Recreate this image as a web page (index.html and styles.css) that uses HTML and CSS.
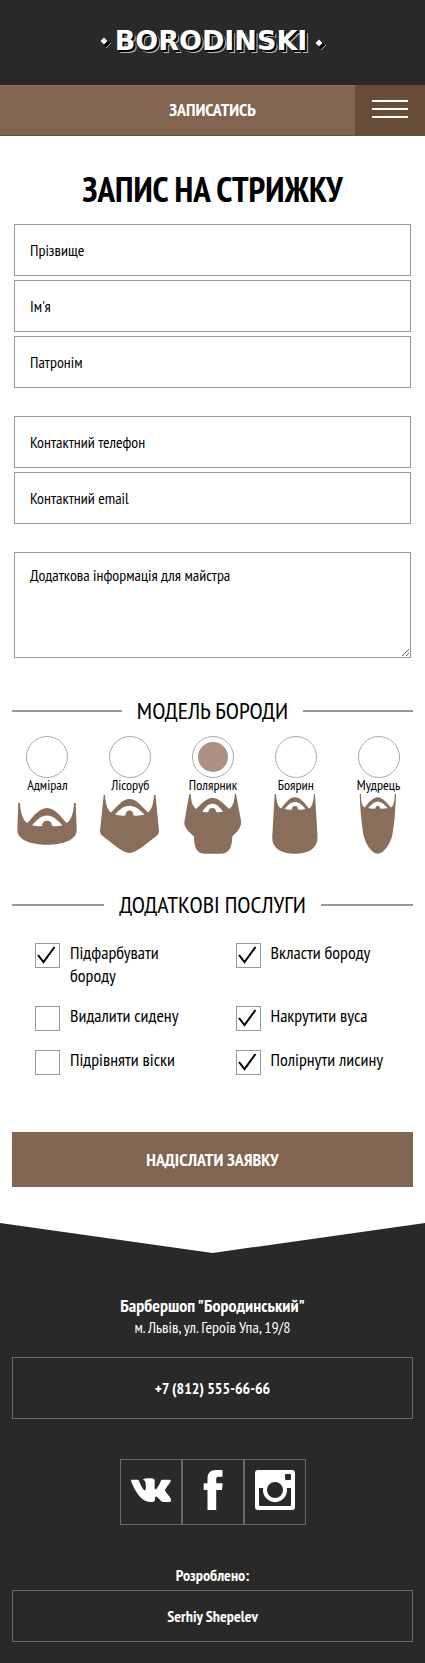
FILE: index.html
```html
<!DOCTYPE html>
<html lang="uk">
<head>
<meta charset="utf-8">
<meta name="viewport" content="width=device-width, initial-scale=1">
<title>Запис на стрижку</title>
<link rel="stylesheet" href="styles.css">
</head>
<body>
<header class="header">
  <a class="logo" href="#">
    <svg class="logo-mark" viewBox="0 0 12 12" aria-hidden="true"><path class="mark-line" d="M6 11 11 6"/><path class="mark-shade" d="M6 2 10 6 6 10 2 6Z"/><path class="mark-face" d="M4 .5 7.500 4 4 7.500 .5 4Z"/></svg>
    <span class="logo-text">BORODINSKI</span>
    <svg class="logo-mark logo-mark-end" viewBox="0 0 12 12" aria-hidden="true"><path class="mark-line" d="M6 11 11 6"/><path class="mark-shade" d="M6 2 10 6 6 10 2 6Z"/><path class="mark-face" d="M4 .5 7.500 4 4 7.500 .5 4Z"/></svg>
  </a>
</header>
<nav class="bar">
  <a class="bar-link" href="#form">ЗАПИСАТИСЬ</a>
  <button class="menu" type="button" aria-label="Меню"><span></span><span></span><span></span></button>
</nav>
<main class="main">
  <h1 class="title">ЗАПИС НА СТРИЖКУ</h1>
  <form id="form" class="form">
    <div class="fields">
      <input class="field" type="text" placeholder="Прізвище" aria-label="Прізвище">
      <input class="field" type="text" placeholder="Ім'я" aria-label="Ім'я">
      <input class="field" type="text" placeholder="Патронім" aria-label="Патронім">
    </div>
    <div class="fields">
      <input class="field" type="tel" placeholder="Контактний телефон" aria-label="Контактний телефон">
      <input class="field" type="email" placeholder="Контактний email" aria-label="Контактний email">
    </div>
    <div class="fields">
      <textarea class="field area" placeholder="Додаткова інформація для майстра" aria-label="Додаткова інформація для майстра"></textarea>
    </div>

    <h2 class="section beard-title">МОДЕЛЬ БОРОДИ</h2>
    <div class="beards">
      <label class="beard"><input class="radio" type="radio" name="beard">Адмірал
        <svg class="beard-pic" viewBox="0 0 60 60" aria-hidden="true"><path d="M1.300 9H3C3.500 20 6 26 10.300 29 16 23 22 14 30 14S44 23 49.700 29C54 26 56.500 20 57 9H58.700L59.700 36C59.700 46 46 50.700 30 50.700S.3 46 .3 36ZM15 31.300Q20 32.500 25 32C25 28.500 27 26.700 30 26.700S35 28.500 35 32Q40 32.500 45.500 31.300C39 25 36 21.500 30 21.500S21 25 15 31.300Z"/></svg></label>
      <label class="beard"><input class="radio" type="radio" name="beard">Лісоруб
        <svg class="beard-pic" viewBox="0 0 60 60" aria-hidden="true"><path d="M3.700 1H5C5.500 10 7.500 16 11 18.500 17 13 22 5 29.500 5S42 13 48 18.500C51.500 16 53.500 10 54 1H55.500L59 37Q59 40 57 41.500C46 50 36 59 29.500 59S13 50 2 41.500Q0 40 0 37ZM15 20.500Q20 22 25.500 21.500C25.500 18.500 27 16.500 29.500 16.500S33.500 18.500 33.500 21.500Q39 22 44.500 20.500C38 14 35 12 29.500 12S21 14 15 20.500Z"/></svg></label>
      <label class="beard"><input class="radio" type="radio" name="beard" checked>Полярник
        <svg class="beard-pic" viewBox="0 0 60 60" aria-hidden="true"><path d="M6.300 0H7.700C8 8 10 13 13.300 15 18 10 23 4 29.500 4S41 10 46 15C49.500 13 51.500 8 51.700 0H53L58 27C59 33 54 38 49.300 42.500 49 54 46 59.700 37 59.700H22C14 59.700 11 54 11 42.500 6 38 0 33 1.500 27ZM19.300 17.700Q22 18.500 25.500 18C25.500 15.500 27 14 29.500 14S33 15.500 33 18Q36 18.500 40 17.700C36 12 33 9.700 29.500 9.700S23 12 19.300 17.700Z"/></svg></label>
      <label class="beard"><input class="radio" type="radio" name="beard">Боярин
        <svg class="beard-pic" viewBox="0 0 60 60" aria-hidden="true"><path d="M8.700 0H10C10.500 8 12 13 15 14.500 19 10 23 3.300 29 3.300S39 10 43 14.500C46 13 47.500 8 48 0H49L51.500 42C52 55 42 59.700 29 59.700S5.500 55 6.300 42ZM18.700 14.700Q22 16 26 15.500C26 13 27 12 29 12S32 13 32 15.500Q36 16 39.500 14.700C35 10 33 8 29 8S23 10 18.700 14.700Z"/></svg></label>
      <label class="beard"><input class="radio" type="radio" name="beard">Мудрець
        <svg class="beard-pic" viewBox="0 0 60 60" aria-hidden="true"><path d="M10.700 0H12C12 8 13 12 15.700 13.500 19 9 24 3.300 28.700 3.300S38 9 42 13.500C44.500 12 45.500 8 45.700 0H47C46.500 12 46 25 43.500 40 42 49 35 59.700 28.700 59.700S16 49 14.200 40C12 25 11 12 10.700 0ZM19.300 14Q23 15 26.500 14.500C26.500 12.500 27 11.700 28.700 11.700S31 12.500 31 14.500Q35 15 38.500 14C34 9 32 7.700 28.700 7.700S24 9 19.300 14Z"/></svg></label>
    </div>

    <h2 class="section service-title">ДОДАТКОВІ ПОСЛУГИ</h2>
    <div class="services">
      <label class="service"><span class="tick"><input type="checkbox" checked><svg viewBox="0 0 25 25" aria-hidden="true"><path d="M3 12 8.500 19 19.500 4"/></svg></span><span>Підфарбувати бороду</span></label>
      <label class="service"><span class="tick"><input type="checkbox" checked><svg viewBox="0 0 25 25" aria-hidden="true"><path d="M3 12 8.500 19 19.500 4"/></svg></span><span>Вкласти бороду</span></label>
      <label class="service"><span class="tick"><input type="checkbox"><svg viewBox="0 0 25 25" aria-hidden="true"><path d="M3 12 8.500 19 19.500 4"/></svg></span><span>Видалити сидену</span></label>
      <label class="service"><span class="tick"><input type="checkbox" checked><svg viewBox="0 0 25 25" aria-hidden="true"><path d="M3 12 8.500 19 19.500 4"/></svg></span><span>Накрутити вуса</span></label>
      <label class="service"><span class="tick"><input type="checkbox"><svg viewBox="0 0 25 25" aria-hidden="true"><path d="M3 12 8.500 19 19.500 4"/></svg></span><span>Підрівняти віски</span></label>
      <label class="service"><span class="tick"><input type="checkbox" checked><svg viewBox="0 0 25 25" aria-hidden="true"><path d="M3 12 8.500 19 19.500 4"/></svg></span><span>Полірнути лисину</span></label>
    </div>
    <button class="submit" type="submit">НАДІСЛАТИ ЗАЯВКУ</button>
  </form>
</main>
<footer class="footer">
  <svg class="notch" viewBox="0 0 100 30" preserveAspectRatio="none" aria-hidden="true"><path d="M0 0H100L50 30Z"/></svg>
  <p class="name">Барбершоп "Бородинський"</p>
  <p class="address">м. Львів, ул. Героїв Упа, 19/8</p>
  <a class="phone" href="tel:+78125556666">+7 (812) 555-66-66</a>
  <div class="socials">
    <a class="social" href="#" aria-label="VK"><svg viewBox="0 0 40 40"><path d="M.5 9.700H6.500Q7.500 9.700 8 11C10 16 12 19.500 13.500 20.500 15 21 15 15 14.500 12.500 14.300 11 13.500 10.200 12 9.800 12.500 8.500 15 8.200 18 8.200 21 8.200 23.500 8.300 23.700 10.500 24 13 23 18 24.300 19.500 26 19.500 28.500 14 30 10.500Q30.300 9.700 31.200 9.700H38.500Q40 9.700 39.700 11C38.500 14 34.500 18.500 34 20 34 22 39 26 40 29.500 40.300 31 39.500 32 38 32H32C30 32 28 28 25.500 26.500 23.500 26 24.300 30 23.500 31.200 22 32.500 17 32 14 30.700 8 27.500 3 19 0 11Q-.1 9.900 .5 9.700Z"/></svg></a>
    <a class="social" href="#" aria-label="Facebook"><svg viewBox="0 0 40 40"><path d="M14.500 40V20H10.700V13.200H14.500V9C14.500 3 17.500 0 23 0H29.500V6.800H25.500C23.500 6.800 23.200 7.700 23.200 9.500V13.200H29.700L29 20H23.200V40Z"/></svg></a>
    <a class="social" href="#" aria-label="Instagram"><svg viewBox="0 0 40 40"><path fill-rule="evenodd" d="M3 0H37Q40 0 40 3V37Q40 40 37 40H3Q0 40 0 37V3Q0 0 3 0ZM31 4Q30 4 30 5V9Q30 10 31 10H35Q36 10 36 9V5Q36 4 35 4ZM4 18V35Q4 36 5 36H35Q36 36 36 35V18H31.800A12 12 0 1 1 8.200 18ZM28 20A8 8 0 1 0 12 20 8 8 0 1 0 28 20Z"/></svg></a>
  </div>
  <p class="credit">Розроблено:</p>
  <a class="author" href="#">Serhiy Shepelev</a>
</footer>
</body>
</html>
```
FILE: styles.css
```css
* { box-sizing: border-box; }

body {
  margin: 0;
  background: #fff;
  color: #000;
  font: 16px/21px "PT Sans Narrow", "Open Sans Condensed", sans-serif;
}

h1, h2, p { margin: 0; }
a { color: inherit; text-decoration: none; }
button, input, textarea { font: inherit; margin: 0; }

/* Header */
.header {
  display: flex;
  justify-content: center;
  height: 85px;
  padding: 25px 0 0 2px;
  background: #292929;
}
.logo {
  display: flex;
  gap: 3px;
  color: #fff;
}
.logo-text {
  font: bold 27px/32px "DejaVu Sans", sans-serif;
  text-shadow: 1px 1px 0 #000, 2px 2px 0 #000, 3px 3px 0 #bbb;
}
.logo-mark { width: 12px; height: 12px; margin-top: 12px; }
.logo-mark-end { margin: 14px 0 0 5px; }
.mark-line { fill: none; stroke: #aaa; }
.mark-shade { fill: #000; }
.mark-face { fill: #fff; }

.bar {
  display: flex;
  height: 51px;
  background: #826550;
  border-bottom: 1px solid #69503d;
}
.bar-link {
  flex: 1;
  padding-left: 70px;
  border-top: 1px solid #8d725f;
  color: #fff;
  font-size: 18px;
  font-weight: bold;
  line-height: 47px;
  text-align: center;
}
.menu {
  display: flex;
  flex-direction: column;
  gap: 6px;
  width: 70px;
  padding: 15px 17px;
  border: 0;
  background: #694c37;
}
.menu span { height: 2px; background: #fff; }

/* Form */
.main { padding: 30px 12px 36px; }
.title {
  font-size: 35px;
  line-height: 46px;
  text-align: center;
}
.form { padding-top: 12px; }
.fields {
  display: grid;
  gap: 4px;
  padding: 0 2px;
}
.fields + .fields { margin-top: 28px; }
.field {
  width: 100%;
  height: 52px;
  padding: 0 15px;
  border: 1px solid #999;
  border-radius: 0;
  background: #fff;
}
.field::placeholder { color: #000; opacity: 1; }
.area {
  display: block;
  height: 106px;
  padding: 12px 15px;
}

.section {
  display: flex;
  align-items: center;
  gap: 15px;
  font-size: 24px;
  font-weight: normal;
  line-height: 32px;
}
.section::before, .section::after {
  content: "";
  flex: 1;
  height: 2px;
  background: #999;
}
.beard-title { margin-top: 37px; }
.service-title { margin-top: 35px; }

.beards {
  display: grid;
  grid-template-columns: repeat(5, 1fr);
  margin: 9px -7px 0 -6px;
}
.beard {
  display: flex;
  flex-direction: column;
  align-items: center;
  font-size: 14px;
  line-height: 14px;
}
.radio {
  appearance: none;
  width: 42px;
  height: 42px;
  border: 1px solid #aaa;
  border-radius: 50%;
  background: #fff;
}
.radio:checked {
  padding: 5px;
  background: #ad907f content-box;
}
.beard-pic {
  width: 60px;
  height: 60px;
  margin-top: 2px;
  fill: #896e5c;
  fill-rule: evenodd;
}

.services {
  display: grid;
  grid-template-columns: 1fr 1fr;
  gap: 17px 0;
  margin-top: 20px;
}
.service {
  display: flex;
  gap: 10px;
  padding: 0 40px 0 23px;
  font-size: 18px;
  line-height: 23px;
}
.service:nth-child(n + 2) { padding-right: 16px; }
.tick {
  display: grid;
  flex: none;
  width: 25px;
  height: 25px;
  margin-top: 2px;
}
.tick input, .tick svg { grid-area: 1 / 1; }
.tick input {
  appearance: none;
  border: 1px solid #999;
  background: #fff;
}
.tick svg {
  visibility: hidden;
  z-index: 1;
  fill: none;
  stroke: #000;
  stroke-width: 2;
  pointer-events: none;
}
.tick input:checked + svg { visibility: visible; }

.submit {
  display: block;
  width: 100%;
  height: 55px;
  margin-top: 57px;
  border: 0;
  background: #826550;
  color: #fff;
  font-size: 18px;
  font-weight: bold;
}

/* Footer */
.footer {
  padding: 0 12px 21px;
  background: #292929;
  color: #fff;
  text-align: center;
}
.notch {
  display: block;
  width: calc(100% + 24px);
  height: 30px;
  margin: 0 -12px 41px;
  fill: #fff;
}
.name {
  font-size: 18px;
  font-weight: bold;
  line-height: 23px;
}
.phone, .author {
  display: block;
  border: 1px solid #696969;
  font-weight: bold;
}
.phone { margin-top: 19px; line-height: 60px; }
.author { margin-top: 4px; line-height: 50px; }
.socials {
  display: flex;
  justify-content: center;
  margin-top: 40px;
}
.social {
  width: 62px;
  height: 66px;
  padding: 10px;
  border: 1px solid #696969;
}
.social svg { display: block; width: 40px; height: 40px; fill: #fff; }
.credit { margin-top: 40px; font-weight: bold; }
```
